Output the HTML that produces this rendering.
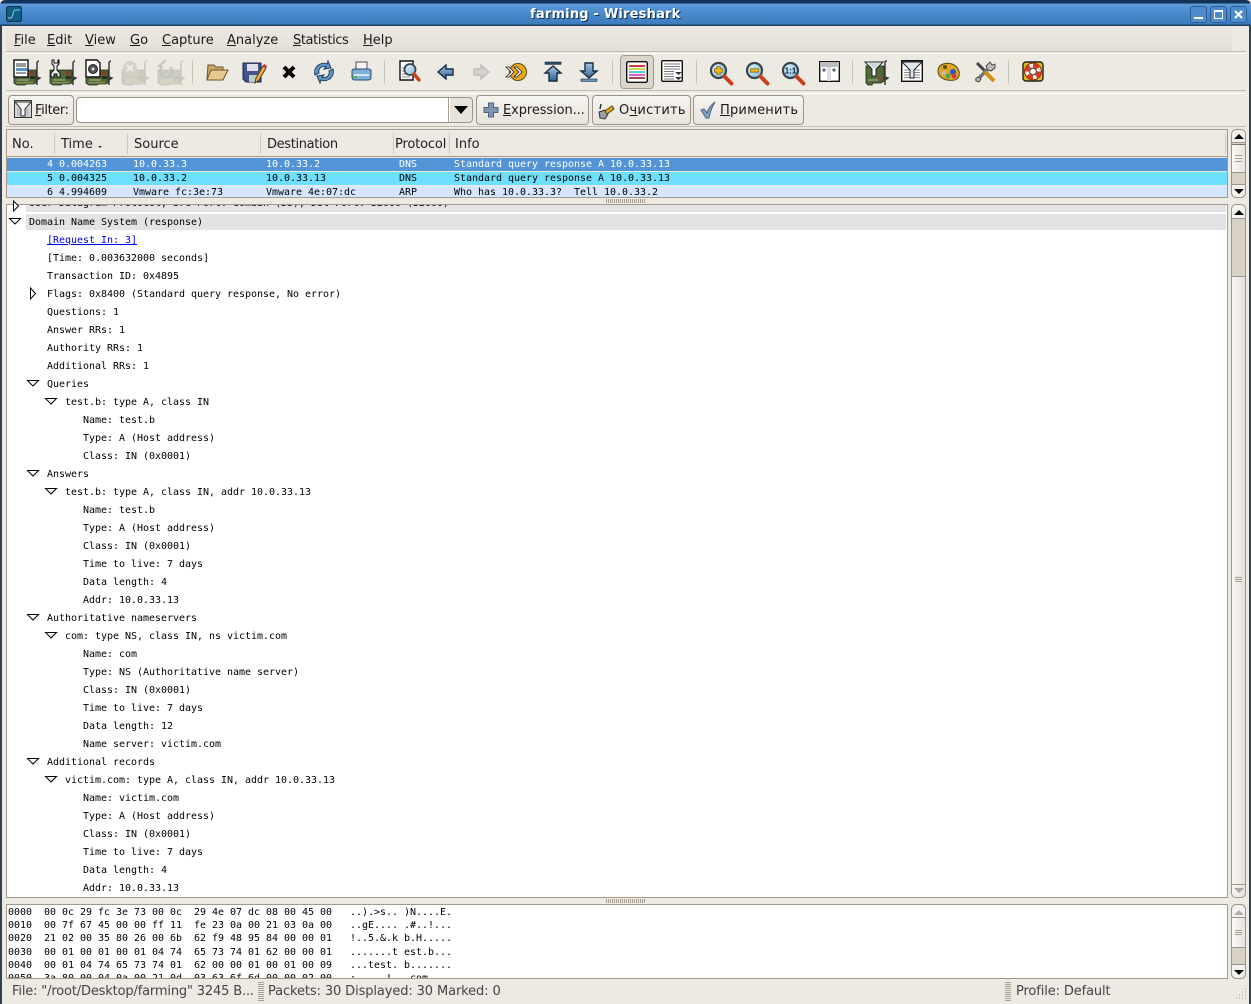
<!DOCTYPE html>
<html><head><meta charset="utf-8"><title>farming - Wireshark</title>
<style>
*{box-sizing:border-box}
html,body{margin:0;padding:0;background:#ede9e3}
#w{position:relative;width:1251px;height:1004px;overflow:hidden;background:#ede9e3;font:13px/16px "DejaVu Sans","Liberation Sans",sans-serif;color:#1a1a1a}
.a{position:absolute;white-space:pre}
.b{position:absolute}
u{text-decoration:underline;text-underline-offset:1px}
.m{font:10px/12px "DejaVu Sans Mono","Liberation Mono",monospace;color:#000;letter-spacing:-.02px;margin-top:1px}
.t{position:absolute;white-space:pre;font:10px/14px "DejaVu Sans Mono","Liberation Mono",monospace;color:#000;letter-spacing:-.02px;margin-top:1px}
.ic{position:absolute;overflow:visible}
.btn{position:absolute;top:95px;height:30px;border:1px solid #9d9487;border-radius:4px;background:linear-gradient(#f6f4f0,#e8e4dc);white-space:pre;line-height:30px}
.hd{position:absolute;top:130px;height:26px;line-height:30px;white-space:pre;color:#222}
.sb{position:absolute;width:15px;border:1px solid #9d9487;background:linear-gradient(90deg,#f7f6f3,#e6e2da)}
</style></head><body><div id="w">

<svg width="0" height="0" style="position:absolute"><defs>
<linearGradient id="gb" x1="0" y1="0" x2="0" y2="1"><stop offset="0" stop-color="#a8c8e6"/><stop offset="1" stop-color="#2f6190"/></linearGradient>
<linearGradient id="gl" x1="0" y1="0" x2="1" y2="1"><stop offset="0" stop-color="#e4f4fb"/><stop offset="1" stop-color="#7cbce4"/></linearGradient>
<g id="nic"><path d="M1 11h22v13l-3 1h-7l-1 1H4l-3-2z" fill="#4f6a36" stroke="#1c2414" stroke-width=".8"/><rect x="3" y="23" width="17" height="1.500" fill="#8f9058"/><rect x="17" y="12" width="4" height="4" fill="#8a3a2a"/><rect x="17" y="17" width="5" height="3" fill="#2c3320"/><rect x="4" y="20" width="12" height="2" fill="#7f9060"/><path d="M24 26V4c0-1 1-2 2-2M24 18l3 1-3 2" fill="none" stroke="#333" stroke-width="1.400"/></g>
<g id="mag"><circle cx="8.500" cy="10.500" r="7.500" fill="url(#gl)" stroke="#3a444e" stroke-width="2.200"/><path d="M14.500 16.500l7 7" stroke="#c8421c" stroke-width="4" stroke-linecap="round"/></g>
</defs></svg>

<!-- titlebar -->
<div class="b" style="left:0;top:0;width:1251px;height:26px;background:linear-gradient(#12325a 0,#12325a 3px,#5c9ad8 4px,#4a8ccf 12px,#3d7cbd 24px,#1d3f63 25px);border-radius:5px 5px 0 0"></div>
<div class="b" style="left:0;top:26px;width:2px;height:978px;background:#33404c"></div>
<div class="b" style="left:1249px;top:26px;width:2px;height:978px;background:#33404c"></div>
<svg class="ic" style="left:6px;top:6px" width="16" height="16"><rect x=".5" y=".5" width="15" height="15" rx="2" fill="#0e5f86" stroke="#0c3248"/><path d="M2 12h3c2 0 2-8 4-8h5" fill="none" stroke="#9fc8dc" stroke-width="1"/></svg>
<div class="a" style="left:530px;top:7px;font-weight:bold;font-size:13px;line-height:15px;color:#0d2c4c;margin:1px 0 0 1px;letter-spacing:.2px">farming - Wireshark</div>
<div class="a" style="left:530px;top:7px;font-weight:bold;font-size:13px;line-height:15px;color:#fff;letter-spacing:.2px">farming - Wireshark</div>
<div class="b" style="left:1190px;top:6px;width:17px;height:17px;border:1px solid #2a5f96;border-radius:3px;background:#4f8ccc"><div class="b" style="left:3px;top:10px;width:9px;height:2px;background:#fff"></div></div>
<div class="b" style="left:1210px;top:6px;width:17px;height:17px;border:1px solid #2a5f96;border-radius:3px;background:#4f8ccc"><div class="b" style="left:3px;top:3px;width:9px;height:9px;border:1px solid #fff;border-top-width:2px"></div></div>
<div class="b" style="left:1230px;top:6px;width:17px;height:17px;border:1px solid #2a5f96;border-radius:3px;background:#4f8ccc"><svg class="ic" style="left:3px;top:3px" width="9" height="9"><path d="M1 1l7 7M8 1L1 8" stroke="#fff" stroke-width="2"/></svg></div>

<!-- menu -->
<div class="b" style="left:6px;top:26px;width:1226px;height:26px;background:linear-gradient(#ede9e3,#e4dfd7)"></div>
<div class="a" style="left:14px;top:33px"><u>F</u>ile</div>
<div class="a" style="left:47px;top:33px"><u>E</u>dit</div>
<div class="a" style="left:85px;top:33px"><u>V</u>iew</div>
<div class="a" style="left:130px;top:33px"><u>G</u>o</div>
<div class="a" style="left:162px;top:33px"><u>C</u>apture</div>
<div class="a" style="left:227px;top:33px"><u>A</u>nalyze</div>
<div class="a" style="left:293px;top:33px;letter-spacing:-.4px"><u>S</u>tatistics</div>
<div class="a" style="left:363px;top:33px"><u>H</u>elp</div>
<div class="b" style="left:6px;top:51px;width:1240px;height:1px;background:#c4bcb0"></div>
<div class="b" style="left:6px;top:53px;width:1240px;height:1px;background:#fff"></div>

<!-- toolbar -->
<div class="b" style="left:6px;top:90px;width:1240px;height:1px;background:#c4bcb0"></div>
<div class="b" style="left:6px;top:93px;width:1240px;height:1px;background:#fff"></div>
<div class="b" style="left:192px;top:60px;width:1px;height:24px;background:#c8c2b8"></div>
<div class="b" style="left:384px;top:60px;width:1px;height:24px;background:#c8c2b8"></div>
<div class="b" style="left:612px;top:60px;width:1px;height:24px;background:#c8c2b8"></div>
<div class="b" style="left:696px;top:60px;width:1px;height:24px;background:#c8c2b8"></div>
<div class="b" style="left:852px;top:60px;width:1px;height:24px;background:#c8c2b8"></div>
<div class="b" style="left:1008px;top:60px;width:1px;height:24px;background:#c8c2b8"></div>

<svg class="ic" style="left:13px;top:59px" width="26" height="26"><use href="#nic"/><rect x="1" y="1" width="14" height="17" fill="#fff" stroke="#111" stroke-width="1.400"/><path d="M3 5h10M3 7h10M3 14h10" stroke="#333"/><rect x="3" y="9" width="11" height="3" fill="#5a94c8"/></svg>
<svg class="ic" style="left:49px;top:59px" width="26" height="26"><use href="#nic"/><path d="M3 1v4l2 2v4l-3 3v4h3v-3h3v3h3v-4l-3-3V7l2-2V1H9v3H5V1z" fill="#eee" stroke="#111" stroke-width="1"/></svg>
<svg class="ic" style="left:85px;top:59px" width="26" height="26"><use href="#nic"/><path d="M1 1h11l3 3v14H1z" fill="#fff" stroke="#111" stroke-width="1.400"/><circle cx="8" cy="10" r="4.500" fill="#555" stroke="#222"/><circle cx="8" cy="10" r="1.500" fill="#ddd"/></svg>
<svg class="ic" style="left:121px;top:59px;opacity:.2" width="26" height="26"><use href="#nic"/><circle cx="9" cy="9" r="7" fill="#777"/><path d="M6 6l6 6M12 6l-6 6" stroke="#fff" stroke-width="2"/></svg>
<svg class="ic" style="left:157px;top:59px;opacity:.2" width="26" height="26"><use href="#nic"/><path d="M9 1L2 7l3 1a6 6 0 1 0 8 0" fill="none" stroke="#333" stroke-width="2"/></svg>

<svg class="ic" style="left:205px;top:61px" width="24" height="22"><path d="M2 18L3 4h6l2 2h7v3" fill="#c8a868" stroke="#6a5428"/><path d="M2 19l4-10h17l-5 10z" fill="#e6c890" stroke="#6a5428"/></svg>
<svg class="ic" style="left:243px;top:61px" width="24" height="24"><path d="M0 2h18v19H3l-3-3z" fill="#44558c" stroke="#1a2448"/><rect x="4" y="3" width="11" height="7" fill="#dde"/><rect x="6" y="14" width="8" height="7" fill="#bcc"/><path d="M12 22l1-5 7-12 3 2-7 12z" fill="#e8b04c" stroke="#5a3c14"/><path d="M20 5l3 2 1-2-3-2z" fill="#c82c2c"/></svg>
<svg class="ic" style="left:282px;top:65px" width="14" height="14"><path d="M2 2l10 10M12 2L2 12" stroke="#000" stroke-width="4"/></svg>
<svg class="ic" style="left:312px;top:60px" width="24" height="24"><path d="M3 15A9 9 0 0 1 15 4l1-3 3 7-7 1 2-2a5 5 0 0 0-7 6z" fill="#5c98cc" stroke="#1e3c5c"/><path d="M21 9a9 9 0 0 1-12 11l-1 3-3-7 7-1-2 2a5 5 0 0 0 7-6z" fill="#5c98cc" stroke="#1e3c5c"/></svg>
<svg class="ic" style="left:351px;top:61px" width="22" height="21"><path d="M5 1h11v9H5z" fill="#f4f4f4" stroke="#555"/><path d="M1 10q0-2 3-2h13q3 0 3 2v6q0 3-3 3H4q-3 0-3-3z" fill="#7caed8" stroke="#2e4c6c"/><rect x="3" y="13" width="15" height="2" fill="#d8e8f4"/><rect x="3" y="15" width="3" height="2" fill="#4a4"/></svg>

<svg class="ic" style="left:399px;top:60px" width="24" height="24"><path d="M1 1h13v19H1z" fill="#fff" stroke="#111" stroke-width="1.400"/><path d="M3 8h2M3 11h2M3 14h5M3 17h8" stroke="#888"/><circle cx="11" cy="9.500" r="5.500" fill="url(#gl)" stroke="#3a444e" stroke-width="1.800"/><path d="M15 14l5 6" stroke="#c8421c" stroke-width="3.400" stroke-linecap="round"/></svg>
<svg class="ic" style="left:437px;top:63px" width="18" height="18"><path d="M1 9l8-7v4h7v6H9v4z" fill="url(#gb)" stroke="#142c44" stroke-width="1.400"/></svg>
<svg class="ic" style="left:472px;top:63px;opacity:.35" width="18" height="18"><path d="M17 9L9 2v4H2v6h7v4z" fill="#aaa" stroke="#777" stroke-width="1.400"/></svg>
<svg class="ic" style="left:505px;top:62px" width="23" height="20"><circle cx="13" cy="10" r="8.500" fill="#e8a820" stroke="#6a4c0c"/><path d="M1 5l5 5-5 5h3l5-5-5-5zM9 5l5 5-5 5h3l5-5-5-5z" fill="#fff" stroke="#222" stroke-width=".8"/></svg>
<svg class="ic" style="left:544px;top:62px" width="18" height="20"><rect x="1" y="0" width="16" height="2.400" fill="#27496a" stroke="#142c44" stroke-width=".6"/><path d="M9 4l8 7h-4v8H5v-8H1z" fill="url(#gb)" stroke="#142c44" stroke-width="1.400"/></svg>
<svg class="ic" style="left:580px;top:62px" width="18" height="20"><path d="M5 1h8v8h4l-8 7-8-7h4z" fill="url(#gb)" stroke="#142c44" stroke-width="1.400"/><rect x="1" y="17" width="16" height="2.400" fill="#6a94b8" stroke="#142c44" stroke-width=".6"/></svg>

<div class="b" style="left:620px;top:55px;width:34px;height:34px;border:1px solid #a39a8c;border-radius:4px;background:#dbd5ca"></div>
<svg class="ic" style="left:626px;top:61px" width="22" height="22"><rect x=".7" y=".7" width="20.600" height="20.600" rx="1.500" fill="#fff" stroke="#111" stroke-width="1.400"/><rect x="3" y="4" width="16" height="2" fill="#d23c3c"/><rect x="3" y="7" width="16" height="2" fill="#ccd84c"/><rect x="3" y="10" width="16" height="2" fill="#5cc8e8"/><rect x="3" y="13" width="16" height="2" fill="#e05cd8"/><rect x="3" y="16" width="16" height="2" fill="#9c4c4c"/></svg>
<svg class="ic" style="left:661px;top:60px" width="22" height="22"><rect x=".7" y=".7" width="20.600" height="20.600" rx="1" fill="#fff" stroke="#111" stroke-width="1.400"/><path d="M3 4h16M3 6.500h16M3 9h16M3 11.500h10M3 14h10M3 16.500h10M3 19h10" stroke="#777"/><path d="M14 12h7l-3.500 3zM14 17h7l-3.500 3z" fill="#333"/></svg>

<svg class="ic" style="left:710px;top:60px" width="24" height="24"><use href="#mag"/><path d="M8.500 6v9M4 10.500h9" stroke="#7a5a08" stroke-width="4"/><path d="M8.500 6.500v8M4.500 10.500h8" stroke="#f0c020" stroke-width="2.400"/></svg>
<svg class="ic" style="left:746px;top:60px" width="24" height="24"><use href="#mag"/><path d="M4 10.500h9" stroke="#7a5a08" stroke-width="4"/><path d="M4.500 10.500h8" stroke="#f0c020" stroke-width="2.400"/></svg>
<svg class="ic" style="left:782px;top:60px" width="24" height="24"><use href="#mag"/><text x="8.500" y="13.500" text-anchor="middle" font-family="Liberation Sans,sans-serif" font-size="8" font-weight="bold" fill="#123">1:1</text></svg>
<svg class="ic" style="left:819px;top:61px" width="21" height="21"><rect x=".7" y=".7" width="19.600" height="19.600" fill="#fff" stroke="#111" stroke-width="1.400"/><rect x="1" y="1" width="19" height="5" fill="#bbb"/><rect x="8" y="6" width="4" height="14" fill="#ddd"/><path d="M3 9h4M5 7v4M13 9h4M15 7v4" stroke="#345" stroke-width="1"/></svg>

<svg class="ic" style="left:864px;top:59px" width="26" height="26"><path d="M2 7h18v15l-3 2H9l-1 2H4l-2-2z" fill="#4f6a36" stroke="#1c2414" stroke-width=".8"/><rect x="13" y="17" width="5" height="3" fill="#8a4a3a"/><rect x="4" y="20" width="10" height="2" fill="#7f9060"/><path d="M21 26V3c0-1 1-1 2-1M21 18l3 1-3 2" fill="none" stroke="#333" stroke-width="1.400"/><path d="M1 3h18l-7 7v7H8v-7z" fill="#fff" stroke="#222"/><path d="M4 4h12l-5 5H9z" fill="#cbd6df"/></svg>
<svg class="ic" style="left:901px;top:60px" width="22" height="22"><rect x=".7" y=".7" width="20.600" height="20.600" fill="#fff" stroke="#111" stroke-width="1.400"/><path d="M3 10h16M3 12.500h16M3 15h16M3 17.500h16" stroke="#888"/><path d="M1 2h20l-8 8v8H9v-8z" fill="#dfe6ee" stroke="#222"/></svg>
<svg class="ic" style="left:937px;top:61px" width="24" height="21"><path d="M1 10C1 3 9 1 15 3c6 2 8 8 7 12-1 4-6 5-12 4C5 18 1 15 1 10z" fill="#dca82c" stroke="#5a4410"/><circle cx="8" cy="6" r="2" fill="#6a4c0c"/><circle cx="16" cy="11" r="3" fill="#2c54c8"/><circle cx="17" cy="15" r="2.500" fill="#d83c2c"/><circle cx="11" cy="15" r="2.500" fill="#48a83c"/><circle cx="7" cy="12" r="2" fill="#c8b8c8"/></svg>
<svg class="ic" style="left:974px;top:61px" width="22" height="22"><path d="M3 2l5 5 3 3 8 9" stroke="#444" stroke-width="3"/><path d="M2 20L16 6" stroke="#777" stroke-width="3.400"/><path d="M14 9l-2-4 4-4 2 3 3-1v4l-4 3zM5 16l-3 1 0 3 3 1 2-3z" fill="#bbb" stroke="#333" stroke-width=".8"/><path d="M11 11l9 9" stroke="#d09018" stroke-width="4"/></svg>
<svg class="ic" style="left:1022px;top:61px" width="22" height="21"><rect x="1" y="1" width="20" height="19" rx="3" fill="#ddc020" stroke="#222" stroke-width="1.400"/><circle cx="11" cy="10.500" r="8.400" fill="#f4f0ec" stroke="#7a2010"/><circle cx="11" cy="10.500" r="6.200" fill="none" stroke="#d83c20" stroke-width="4.400" stroke-dasharray="6 3.700"/><circle cx="11" cy="10.500" r="3.400" fill="#fff" stroke="#5a2010"/></svg>

<!-- filter bar -->
<div class="btn" style="left:8px;width:66px"></div>
<svg class="ic" style="left:14px;top:100px" width="18" height="18"><rect x=".5" y=".5" width="17" height="17" fill="#d8d8d8" stroke="#333"/><path d="M3 9h12M3 11h12M3 13h12M3 15h12" stroke="#aaa"/><path d="M1 2h16l-6 7v7H7V9z" fill="#f4f4f4" stroke="#333"/></svg>
<div class="a" style="left:35px;top:103px;letter-spacing:-.4px"><u>F</u>ilter:</div>
<div class="b" style="left:76px;top:97px;width:397px;height:26px;border:1px solid #9d9487;border-radius:4px;background:linear-gradient(90deg,#fff 0,#fff 373px,#e8e4dc 373px)"></div>
<div class="b" style="left:448px;top:98px;width:1px;height:24px;background:#a89f92"></div>
<div class="b" style="left:454px;top:106px;border-left:7px solid transparent;border-right:7px solid transparent;border-top:8px solid #000"></div>
<div class="btn" style="left:476px;width:113px;padding-left:26px;letter-spacing:-.1px"><u>E</u>xpression...</div>
<svg class="ic" style="left:483px;top:102px" width="16" height="16"><path d="M5.500 1h5v4.500H15v5h-4.500V15h-5v-4.500H1v-5h4.500z" fill="#7c96b0" stroke="#4c6480"/></svg>
<div class="btn" style="left:592px;width:99px;padding-left:26px;letter-spacing:.25px">О<u>ч</u>истить</div>
<svg class="ic" style="left:597px;top:102px" width="18" height="18"><path d="M2 10l6-2 3 4-3 5-5-1z" fill="#9aa0a4" stroke="#333"/><path d="M8 9l7-5 2 3-7 5z" fill="#e0ac20" stroke="#5a4410"/><path d="M3 7l1-5" stroke="#333" stroke-width="1.500"/></svg>
<div class="btn" style="left:693px;width:111px;padding-left:26px;letter-spacing:.2px"><u>П</u>рименить</div>
<svg class="ic" style="left:700px;top:101px" width="16" height="18"><path d="M1 9l3-1 3 4c1-4 4-8 8-11-3 5-5 10-6 16H6z" fill="#7ea0c4" stroke="#4a6484"/></svg>
<div class="b" style="left:6px;top:126px;width:1240px;height:1px;background:#c4bcb0"></div>

<!-- packet list -->
<div class="b" style="left:6px;top:129px;width:1222px;height:69px;border:1px solid #a39a8c;background:#ede9e3"></div>
<div class="b" style="left:7px;top:156px;width:1220px;height:1px;background:#a39a8c"></div>
<div class="hd" style="left:12px">No.</div>
<div class="hd" style="left:61px">Time</div>
<div class="b" style="left:98px;top:146px;border-left:2px solid transparent;border-right:2px solid transparent;border-top:2px solid #333"></div>
<div class="hd" style="left:134px">Source</div>
<div class="hd" style="left:267px;letter-spacing:-.35px">Destination</div>
<div class="hd" style="left:395px;letter-spacing:-.15px">Protocol</div>
<div class="hd" style="left:455px">Info</div>
<div class="b" style="left:54px;top:133px;width:1px;height:21px;background:#cfc9bf"></div>
<div class="b" style="left:127px;top:133px;width:1px;height:21px;background:#cfc9bf"></div>
<div class="b" style="left:260px;top:133px;width:1px;height:21px;background:#cfc9bf"></div>
<div class="b" style="left:393px;top:133px;width:1px;height:21px;background:#cfc9bf"></div>
<div class="b" style="left:449px;top:133px;width:1px;height:21px;background:#cfc9bf"></div>
<div class="b" style="left:1225px;top:133px;width:1px;height:21px;background:#cfc9bf"></div>

<div class="b" style="left:7px;top:158px;width:1220px;height:13px;background:#5294d6"></div>
<div class="b" style="left:7px;top:172px;width:1220px;height:13px;background:#6de0ff"></div>
<div class="b" style="left:7px;top:186px;width:1220px;height:11px;background:#d5e6ff"></div>
<div class="m a" style="left:47px;top:158px;color:#fff">4 0.004263</div>
<div class="m a" style="left:133px;top:158px;color:#fff">10.0.33.3</div>
<div class="m a" style="left:266px;top:158px;color:#fff">10.0.33.2</div>
<div class="m a" style="left:399px;top:158px;color:#fff">DNS</div>
<div class="m a" style="left:454px;top:158px;color:#fff">Standard query response A 10.0.33.13</div>
<div class="m a" style="left:47px;top:172px">5 0.004325</div>
<div class="m a" style="left:133px;top:172px">10.0.33.2</div>
<div class="m a" style="left:266px;top:172px">10.0.33.13</div>
<div class="m a" style="left:399px;top:172px">DNS</div>
<div class="m a" style="left:454px;top:172px">Standard query response A 10.0.33.13</div>
<div class="b" style="left:7px;top:186px;width:1220px;height:11px;overflow:hidden">
<div class="m a" style="left:40px;top:0">6 4.994609</div>
<div class="m a" style="left:126px;top:0">Vmware fc:3e:73</div>
<div class="m a" style="left:259px;top:0">Vmware 4e:07:dc</div>
<div class="m a" style="left:392px;top:0">ARP</div>
<div class="m a" style="left:447px;top:0">Who has 10.0.33.3?  Tell 10.0.33.2</div>
</div>

<div class="b" style="left:606px;top:199px;width:40px;height:4px;background:repeating-linear-gradient(90deg,#a89f92 0,#a89f92 1px,#ede9e3 1px,#ede9e3 2px)"></div>

<!-- packet list scrollbar -->
<div class="sb" style="left:1231px;top:129px;height:69px;border-radius:5px;background:#d8d2c6"></div>
<div class="b" style="left:1232px;top:130px;width:13px;height:13px;background:#f4f2ee;border-bottom:1px solid #9d9487;border-radius:5px 5px 0 0"></div>
<div class="b" style="left:1232px;top:144px;width:13px;height:29px;background:linear-gradient(90deg,#fbfaf8,#e6e2da);border-top:1px solid #7d7467;border-bottom:1px solid #9d9487"></div>
<div class="b" style="left:1235px;top:155px;width:7px;height:7px;border-top:1px solid #a89f92;border-bottom:1px solid #a89f92"><div class="b" style="left:0;top:2px;width:7px;height:1px;background:#a89f92"></div></div>
<div class="b" style="left:1232px;top:184px;width:13px;height:13px;background:#f4f2ee;border-top:1px solid #9d9487;border-radius:0 0 5px 5px"></div>
<div class="b" style="left:1234px;top:134px;border-left:5px solid transparent;border-right:5px solid transparent;border-bottom:5px solid #000"></div>
<div class="b" style="left:1234px;top:189px;border-left:5px solid transparent;border-right:5px solid transparent;border-top:5px solid #000"></div>

<!-- tree -->
<div class="b" style="left:6px;top:204px;width:1222px;height:694px;border:1px solid #a39a8c;background:#fff;overflow:hidden"></div>
<div class="b" style="left:26px;top:205px;width:1200px;height:7px;background:#e3e3e3;overflow:hidden"><div class="t" style="left:3px;top:-9px;color:#000">User Datagram Protocol, Src Port: domain (53), Dst Port: 52000 (52000)</div></div>
<svg class="ic" style="left:12px;top:205px" width="8" height="5"><path d="M1.500-4l5 5-5 5z" fill="#fff" stroke="#000"/></svg>
<div class="b" style="left:26px;top:214px;width:1200px;height:16px;background:#e3e3e3"></div>
<div class="t" style="left:29px;top:215px">Domain Name System (response)</div>
<div class="t" style="left:47px;top:233px;color:#0000e6;text-decoration:underline">[Request In: 3]</div>
<div class="t" style="left:47px;top:251px">[Time: 0.003632000 seconds]</div>
<div class="t" style="left:47px;top:269px">Transaction ID: 0x4895</div>
<div class="t" style="left:47px;top:287px">Flags: 0x8400 (Standard query response, No error)</div>
<div class="t" style="left:47px;top:305px">Questions: 1</div>
<div class="t" style="left:47px;top:323px">Answer RRs: 1</div>
<div class="t" style="left:47px;top:341px">Authority RRs: 1</div>
<div class="t" style="left:47px;top:359px">Additional RRs: 1</div>
<div class="t" style="left:47px;top:377px">Queries</div>
<div class="t" style="left:65px;top:395px">test.b: type A, class IN</div>
<div class="t" style="left:83px;top:413px">Name: test.b</div>
<div class="t" style="left:83px;top:431px">Type: A (Host address)</div>
<div class="t" style="left:83px;top:449px">Class: IN (0x0001)</div>
<div class="t" style="left:47px;top:467px">Answers</div>
<div class="t" style="left:65px;top:485px">test.b: type A, class IN, addr 10.0.33.13</div>
<div class="t" style="left:83px;top:503px">Name: test.b</div>
<div class="t" style="left:83px;top:521px">Type: A (Host address)</div>
<div class="t" style="left:83px;top:539px">Class: IN (0x0001)</div>
<div class="t" style="left:83px;top:557px">Time to live: 7 days</div>
<div class="t" style="left:83px;top:575px">Data length: 4</div>
<div class="t" style="left:83px;top:593px">Addr: 10.0.33.13</div>
<div class="t" style="left:47px;top:611px">Authoritative nameservers</div>
<div class="t" style="left:65px;top:629px">com: type NS, class IN, ns victim.com</div>
<div class="t" style="left:83px;top:647px">Name: com</div>
<div class="t" style="left:83px;top:665px">Type: NS (Authoritative name server)</div>
<div class="t" style="left:83px;top:683px">Class: IN (0x0001)</div>
<div class="t" style="left:83px;top:701px">Time to live: 7 days</div>
<div class="t" style="left:83px;top:719px">Data length: 12</div>
<div class="t" style="left:83px;top:737px">Name server: victim.com</div>
<div class="t" style="left:47px;top:755px">Additional records</div>
<div class="t" style="left:65px;top:773px">victim.com: type A, class IN, addr 10.0.33.13</div>
<div class="t" style="left:83px;top:791px">Name: victim.com</div>
<div class="t" style="left:83px;top:809px">Type: A (Host address)</div>
<div class="t" style="left:83px;top:827px">Class: IN (0x0001)</div>
<div class="t" style="left:83px;top:845px">Time to live: 7 days</div>
<div class="t" style="left:83px;top:863px">Data length: 4</div>
<div class="t" style="left:83px;top:881px">Addr: 10.0.33.13</div>

<svg class="ic" style="left:0;top:200px" width="80" height="600">
<g fill="#fff" stroke="#000" stroke-width="1">
<path d="M9.500 18.500h11l-5.500 5.500z"/>
<path d="M30.500 88v11l5-5.500z"/>
<path d="M27.500 180.500h11l-5.500 5.500z"/>
<path d="M45.500 198.500h11l-5.500 5.500z"/>
<path d="M27.500 270.500h11l-5.500 5.500z"/>
<path d="M45.500 288.500h11l-5.500 5.500z"/>
<path d="M27.500 414.500h11l-5.500 5.500z"/>
<path d="M45.500 432.500h11l-5.500 5.500z"/>
<path d="M27.500 558.500h11l-5.500 5.500z"/>
<path d="M45.500 576.500h11l-5.500 5.500z"/>
</g></svg>

<div class="b" style="left:606px;top:899px;width:40px;height:4px;background:repeating-linear-gradient(90deg,#a89f92 0,#a89f92 1px,#ede9e3 1px,#ede9e3 2px)"></div>

<!-- tree scrollbar -->
<div class="sb" style="left:1231px;top:204px;height:694px;border-radius:5px"></div>
<div class="b" style="left:1232px;top:205px;width:13px;height:13px;background:#f4f2ee;border-radius:5px 5px 0 0"></div>
<div class="b" style="left:1232px;top:218px;width:13px;height:59px;background:#d8d2c6;border-top:1px solid #9d9487;border-bottom:1px solid #9d9487"></div>
<div class="b" style="left:1235px;top:577px;width:7px;height:5px;border-top:1px solid #a89f92;border-bottom:1px solid #a89f92"><div class="b" style="left:0;top:1px;width:7px;height:1px;background:#a89f92"></div></div>
<div class="b" style="left:1232px;top:884px;width:13px;height:1px;background:#9d9487"></div>
<div class="b" style="left:1234px;top:210px;border-left:5px solid transparent;border-right:5px solid transparent;border-bottom:5px solid #000"></div>
<div class="b" style="left:1234px;top:888px;border-left:5px solid transparent;border-right:5px solid transparent;border-top:5px solid #a8a8a8"></div>

<!-- hex -->
<div class="b" style="left:6px;top:904px;width:1222px;height:75px;border:1px solid #a39a8c;background:#fff;overflow:hidden">
<div class="a" style="left:1px;top:1px;font:10px/13.200px 'DejaVu Sans Mono','Liberation Mono',monospace;color:#000;letter-spacing:-.02px">0000  00 0c 29 fc 3e 73 00 0c  29 4e 07 dc 08 00 45 00   ..).&gt;s.. )N....E.
0010  00 7f 67 45 00 00 ff 11  fe 23 0a 00 21 03 0a 00   ..gE.... .#..!...
0020  21 02 00 35 80 26 00 6b  62 f9 48 95 84 00 00 01   !..5.&amp;.k b.H.....
0030  00 01 00 01 00 01 04 74  65 73 74 01 62 00 00 01   .......t est.b...
0040  00 01 04 74 65 73 74 01  62 00 00 01 00 01 00 09   ...test. b.......
0050  3a 80 00 04 0a 00 21 0d  03 63 6f 6d 00 00 02 00   :.....!. .com....</div>
</div>
<div class="sb" style="left:1231px;top:904px;height:75px;border-radius:5px;background:#d8d2c6"></div>
<div class="b" style="left:1232px;top:905px;width:13px;height:13px;background:#f4f2ee;border-bottom:1px solid #9d9487;border-radius:5px 5px 0 0"></div>
<div class="b" style="left:1232px;top:918px;width:13px;height:30px;background:linear-gradient(90deg,#fbfaf8,#e6e2da);border-bottom:1px solid #9d9487"></div>
<div class="b" style="left:1235px;top:930px;width:7px;height:5px;border-top:1px solid #a89f92;border-bottom:1px solid #a89f92"><div class="b" style="left:0;top:1px;width:7px;height:1px;background:#a89f92"></div></div>
<div class="b" style="left:1232px;top:964px;width:13px;height:14px;background:#f4f2ee;border-top:1px solid #9d9487;border-radius:0 0 5px 5px"></div>
<div class="b" style="left:1234px;top:910px;border-left:5px solid transparent;border-right:5px solid transparent;border-bottom:5px solid #b0b0b0"></div>
<div class="b" style="left:1234px;top:970px;border-left:5px solid transparent;border-right:5px solid transparent;border-top:5px solid #000"></div>

<!-- status -->
<div class="a" style="left:12px;top:984px;color:#444;letter-spacing:-.16px">File: "/root/Desktop/farming" 3245 B...</div>
<div class="b" style="left:258px;top:982px;width:6px;height:20px;background:repeating-linear-gradient(#a89f92 0,#a89f92 1px,#ede9e3 1px,#ede9e3 2px)"></div>
<div class="a" style="left:268px;top:984px;color:#444;letter-spacing:-.11px">Packets: 30 Displayed: 30 Marked: 0</div>
<div class="b" style="left:1005px;top:982px;width:6px;height:20px;background:repeating-linear-gradient(#a89f92 0,#a89f92 1px,#ede9e3 1px,#ede9e3 2px)"></div>
<div class="a" style="left:1016px;top:984px;color:#444;letter-spacing:-.12px">Profile: Default</div>
<svg class="ic" style="left:1236px;top:988px" width="11" height="12"><path d="M9 1h1M9 4h1M6 4h1M9 7h1M6 7h1M3 7h1M9 10h1M6 10h1M3 10h1M0 10h1" stroke="#a89f92"/></svg>
</div></body></html>
